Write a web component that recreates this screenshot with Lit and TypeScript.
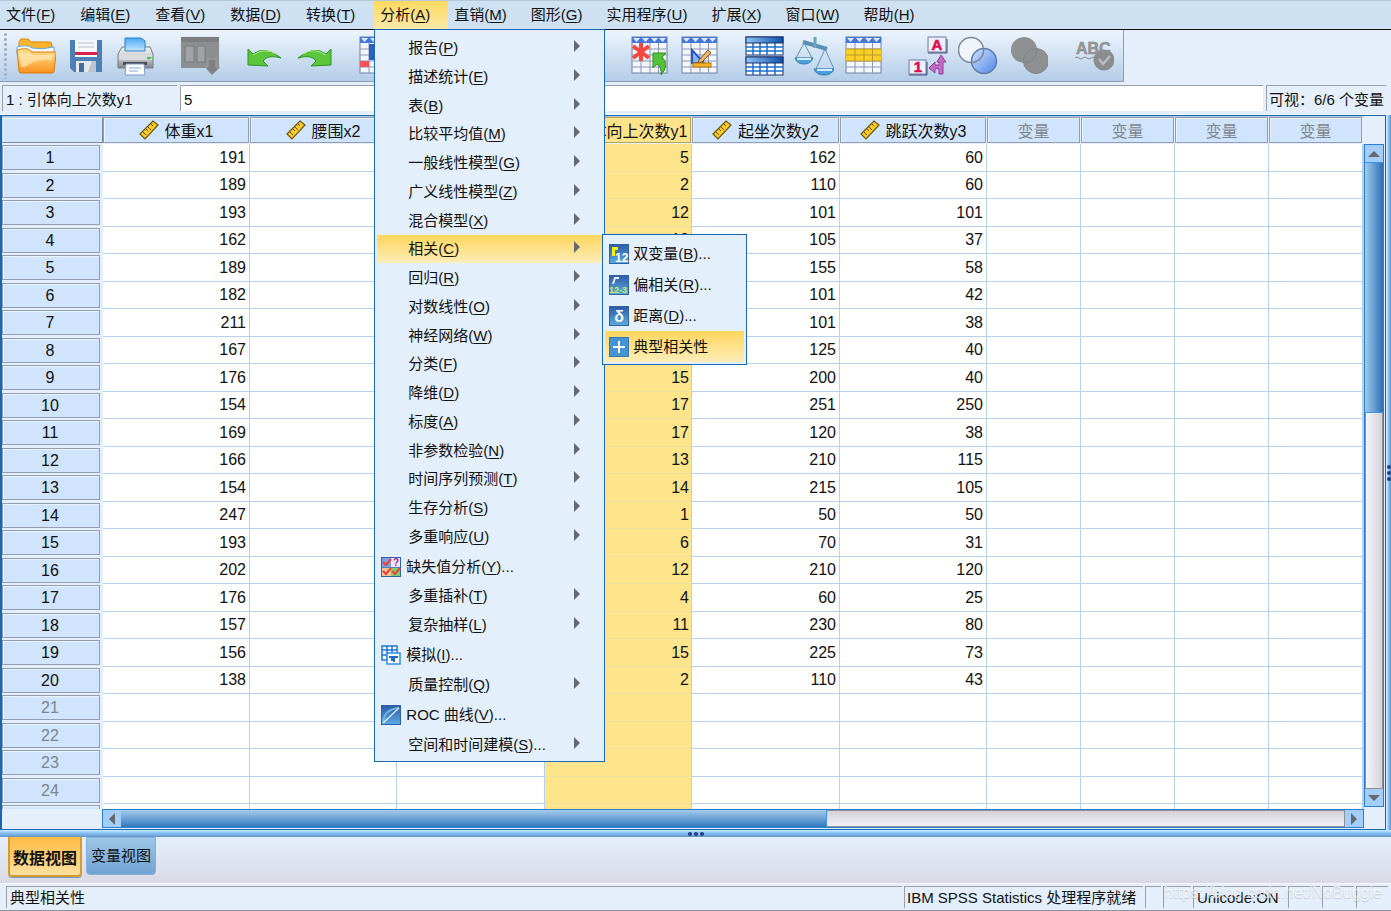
import { LitElement, html, svg, css, nothing, TemplateResult } from "lit";
import { customElement, state } from "lit/decorators.js";
import { classMap } from "lit/directives/class-map.js";

type Entry = { label: string; key?: string; more?: boolean; icon?: TemplateResult; open?: boolean; leaf?: boolean };

const pic = (w: number, h: number, body: unknown) =>
  html`<svg width=${w} height=${h} viewBox="0 0 ${w} ${h}" aria-hidden="true">${body}</svg>`;

/* ---------- toolbar drawings, all on a 40 x 40 field ---------- */

const sheetBase = svg`
  <rect x="2" y="1" width="35" height="36" fill="#f3f6fb" stroke="#6f7fa6"/>
  <rect x="2" y="1" width="35" height="6" fill="#4677d8"/>
  <path d="M3 2h7l-3.500 4zM12 2h7l-3.500 4zM21 2h7l-3.500 4zM29 2h7l-3.500 4z" fill="#dfe9ff"/>
  <path d="M2 13h35M2 19h35M2 25h35M2 31h35M11 7v30M20 7v30M28.500 7v30" stroke="#8b97b4" fill="none"/>`;

const art: Record<string, TemplateResult> = {
  open: svg`
    <defs><linearGradient id="fo" x1="0" y1="0" x2="0" y2="1"><stop offset="0" stop-color="#ffe08a"/><stop offset=".5" stop-color="#ffbe58"/><stop offset="1" stop-color="#f98f1c"/></linearGradient></defs>
    <path d="M3 12V6l2-3h7l3 3h18q3 0 3 3v8H3z" fill="#fbb52c" stroke="#d98508"/>
    <path d="M1 11q10-3 15 1 10 2 22-1v7H1z" fill="#f4faff" stroke="#5ea9e6"/>
    <path d="M1 14q5-2 11-1l4 3h23q1 0 1 2l-2 17q0 2-2 2H5q-2 0-2-2z" fill="url(#fo)" stroke="#e0790a"/>
    <path d="M3 17h10l4 2h20l-1 5Q20 22 9 31H5z" fill="#fff0c8" opacity=".6"/>`,
  save: svg`
    <path d="M4 4h32v32H8l-4-4z" fill="#4c80b4"/>
    <path d="M9 4h22v17H9z" fill="#f4f7fa"/><path d="M12 7h16M12 11h16" stroke="#c9d3dd" stroke-width="1.5"/>
    <rect x="9" y="16" width="22" height="3" fill="#d8204c"/>
    <rect x="10" y="25" width="20" height="11" fill="#e4e8ec"/><rect x="13" y="27" width="5" height="9" fill="#3f6f9f"/>
    <path d="M26 25h4v11h-8z" fill="#bcc5ce"/>`,
  print: svg`
    <defs><linearGradient id="pa" x1="0" y1="0" x2="0" y2="1"><stop offset="0" stop-color="#4aa9f0"/><stop offset="1" stop-color="#c3e6ff"/></linearGradient>
    <linearGradient id="pb" x1="0" y1="0" x2="0" y2="1"><stop offset="0" stop-color="#f4f4f4"/><stop offset=".55" stop-color="#c4c7ca"/><stop offset="1" stop-color="#7f848a"/></linearGradient></defs>
    <path d="M6 11h28l3 7v14H2V18z" fill="url(#pb)" stroke="#777c82"/>
    <path d="M9 15V2h16l4 3v10z" fill="url(#pa)" stroke="#2c80cc"/>
    <path d="M3 19h33v5H3z" fill="#d9dbde"/><rect x="7" y="26" width="24" height="3" fill="#4b4f55"/>
    <rect x="31" y="21" width="4" height="2" fill="#35c64a"/>
    <path d="M10 28h18l1 11H9z" fill="#fff" stroke="#7c9cc4"/><path d="M13 32h12M13 35h9" stroke="#88a8d0"/>`,
  recall: svg`
    <path d="M1 1h38v31H1z" fill="#8d8e90"/><path d="M1 1h38v5H1z" fill="#7d7e80"/>
    <path d="M5 10h9v16H5zM17 10h8v16h-8z" fill="#a1a2a4" stroke="#77787a"/>
    <path d="M28 23h8v8h4l-8 8-7-8h3z" fill="#7f8082" stroke="#a0a1a3"/>`,
  undo: svg`<path d="M4 13l5 5q12-9 28 4-13-4-18 3l5 5L4 29z" fill="#5bc53c" stroke="#2a9420"/><path d="M9 19q12-8 23-1" stroke="#b5f08f" fill="none"/>`,
  redo: svg`<path d="M37 13l-5 5Q20 9 4 22q13-4 18 3l-5 5 20-1z" fill="#5bc53c" stroke="#2a9420"/><path d="M32 19q-12-8-23-1" stroke="#b5f08f" fill="none"/>`,
  gotoCase: svg`${sheetBase}<rect x="2" y="25" width="9" height="6" fill="#f0545e"/><path d="M11 8h20v16H11z" fill="#2a5fc0"/>`,
  gotoVar: svg`${sheetBase}<rect x="11" y="8" width="9" height="29" fill="#f0545e"/>`,
  variables: svg`${sheetBase}<rect x="11" y="13" width="18" height="12" fill="#4677d8"/>`,
  stats: svg`<path d="M4 36V20h8v16zM16 36V6h8v30zM28 36V14h8v22z" fill="#4677d8"/>`,
  find: svg`<path d="M10 18h9v20H8zM25 18h8v20h-8zM19 22h6v8h-6z" fill="#26344a"/>`,
  insertCase: svg`${sheetBase}
    <path d="M11 7v18M3 10l16 12M19 10L3 22" stroke="#f5483f" stroke-width="4" fill="none"/>
    <path d="M23 17h13l-4 4q8 8-1 18 1-8-4-11l-4 4z" fill="#55c13a" stroke="#2b9320"/>`,
  insertVar: svg`${sheetBase}
    <path d="M12 14v13h12z" fill="#8db5ff" stroke="#2456c8" stroke-width="2"/>
    <path d="M19 24l9-10 3 3-9 9-4 1z" fill="#e8b56a" stroke="#7a5225"/>
    <rect x="13" y="27" width="18" height="4" fill="#f5b321" stroke="#b3740a"/>`,
  split: svg`
    <defs><linearGradient id="sp"><stop offset="0" stop-color="#8ec5f5"/><stop offset="1" stop-color="#0b50ae"/></linearGradient></defs>
    ${[1, 21].map(y => svg`<rect x="2" y=${y} width="37" height="18" fill="#fff" stroke="#1b2e66"/>
      <path d="M2 ${y + 10}h37M2 ${y + 14}h37M9 ${y + 6}v12M16 ${y + 6}v12M23 ${y + 6}v12M31 ${y + 6}v12" stroke="#1a6fd0" stroke-width="1.500" fill="none"/>
      <rect x="2" y=${y} width="37" height="6" fill="url(#sp)" stroke="#1b2e66"/>`)}`,
  weight: svg`
    <path d="M9 6l24 7" stroke="#5790b4" stroke-width="4"/><path d="M21 1v11" stroke="#6fa3c3" stroke-width="3"/>
    <path d="M10 7L2 22h16L10 7M31 13l-9 20h18L31 13" fill="none" stroke="#5d93b5"/>
    <path d="M1 22h18q-2 6-9 6t-9-6zM20 33h20q-2 6-10 6t-10-6z" fill="#4aa0dc" stroke="#3c7eaa"/>
    <path d="M3 23h14M23 34h15" stroke="#d4f0ff" stroke-width="2"/>`,
  select: svg`${sheetBase}<path d="M2 13h35v12H2z" fill="#fbd023"/><path d="M2 13h35M2 19h35M2 25h35M11 13v12M20 13v12M28.500 13v12" stroke="#b79a35" fill="none"/>`,
  labels: svg`
    <rect x="20" y="1" width="18" height="15" fill="#eef1fb" stroke="#6d79a2"/><rect x="1" y="24" width="17" height="14" fill="#eef1fb" stroke="#6d79a2"/>
    <path d="M20 17h19V3M1 39h18V26" stroke="#3d4975" fill="none"/>
    <text x="29" y="14" text-anchor="middle" font-size="15" font-weight="bold" fill="#e4064c" stroke="#e4064c" stroke-width=".5">A</text>
    <text x="10" y="36" text-anchor="middle" font-size="15" font-weight="bold" fill="#e4064c" stroke="#e4064c" stroke-width=".5">1</text>
    <path d="M33 19l5 7h-3v12h-4v-5q-2-1-4 0v4l-6-5 6-6v3h4v-3h-2z" fill="#c66bc4" stroke="#8e3e93"/>`,
  sets: svg`<defs><linearGradient id="cs" x1="0" y1="0" x2="1" y2="1"><stop offset="0" stop-color="#d4e3fb"/><stop offset="1" stop-color="#4a86ea"/></linearGradient></defs>
    <circle cx="13" cy="14" r="12.500" fill="#f0f5fc" stroke="#7c8796" stroke-width="1.500"/><circle cx="26" cy="25" r="12.500" fill="url(#cs)" stroke="#5f7ba8" stroke-width="1.500"/>
    <path d="M25.500 12.500a12.500 12.500 0 0 1-11 14" fill="none" stroke="#7c8796" stroke-width="1.500"/>`,
  allVars: svg`<circle cx="16" cy="14" r="13" fill="#8e8f91"/><circle cx="28" cy="25" r="12.500" fill="#8e8f91" stroke="#828385"/><path d="M29 14a13 13 0 0 1-12 13" fill="none" stroke="#7d7e80"/>`,
  spell: svg`
    <text x="2" y="18" font-size="16" font-weight="bold" fill="#9a9b9d" stroke="#7f8082" stroke-width=".5">ABC</text>
    <path d="M1 22q2-2 4 0t4 0 4 0 4 0 4 0" fill="none" stroke="#8b8c8e"/>
    <circle cx="30" cy="24" r="10.500" fill="#8b8c8e"/><path d="M25 23l4 5 7-8" fill="none" stroke="#b9babc" stroke-width="2.500"/>`,
};

const toolGroups: { tight?: boolean; items: [string, string][] }[] = [
  { items: [["open", "打开"], ["save", "保存"], ["print", "打印"]] },
  { items: [["recall", "重新调用对话框"]] },
  { items: [["undo", "撤销"], ["redo", "重做"]] },
  { items: [["gotoCase", "转到个案"]] },
  { items: [["gotoVar", "转到变量"], ["variables", "变量"], ["stats", "描述统计"], ["find", "查找"]] },
  { tight: true, items: [["insertCase", "插入个案"], ["insertVar", "插入变量"]] },
  { items: [["split", "拆分文件"], ["weight", "个案加权"], ["select", "选择个案"]] },
  { items: [["labels", "值标签"], ["sets", "使用变量集"], ["allVars", "显示所有变量"]] },
  { items: [["spell", "拼写检查"]] },
];

/* ---------- 20 x 20 menu drawings ---------- */

const tile = (id: string) => svg`
  <defs><linearGradient id=${id} x1="0" y1="0" x2="0" y2="1"><stop offset="0" stop-color="#2d5ba6"/><stop offset="1" stop-color="#5cabe0"/></linearGradient></defs>
  <rect x=".5" y=".5" width="19" height="19" fill="url(#${id})" stroke="#2f62a6"/>`;

const menuArt = {
  bivariate: pic(20, 20, svg`${tile("t1")}<path d="M3 3h6v3H6v6H3z" fill="#f4f000"/><text x="6" y="18" font-size="12" font-weight="bold" fill="#fff">12</text>`),
  partial: pic(20, 20, svg`${tile("t2")}<path d="M4 9l2-6h4" stroke="#e6eef8" stroke-width="2" fill="none"/><text x="0" y="18" font-size="9" font-weight="bold" fill="#c9f04a">12-3</text>`),
  distance: pic(20, 20, svg`${tile("t3")}<text x="10" y="16" text-anchor="middle" font-size="16" font-weight="bold" fill="#fff">δ</text>`),
  plus: pic(20, 20, svg`<rect x=".5" y=".5" width="19" height="19" fill="#4493d4" stroke="#3777b2"/><path d="M10 4v12M4 10h12" stroke="#fff" stroke-width="2"/>`),
  missing: pic(20, 20, svg`${tile("t4")}<rect x="1" y="1" width="9" height="9" fill="#7f9fe0"/><rect x="10" y="1" width="9" height="9" fill="#f4e6f8"/><path d="M1 11h9v8H1z" fill="#f5c19a"/><path d="M10 11h9v8h-9z" fill="#7fce6c"/>
    <path d="M2 5l3 3 5-6M2 14l3 3 5-6M11 14l3 3 5-6" stroke="#e8432e" stroke-width="2" fill="none"/><text x="12" y="9" font-size="10" font-weight="bold" fill="#a026b0">?</text>`),
  simulate: pic(20, 20, svg`<path d="M1 1h15v14H1z" fill="#fff" stroke="#1c78cf" stroke-width="1.500"/><path d="M1 5h15M1 10h15M6 1v14M11 1v14" stroke="#1c78cf" stroke-width="1.500" fill="none"/>
    <rect x="6" y="8" width="13" height="11" fill="#fff" stroke="#2d8ee0" stroke-width="1.500"/><path d="M8 11h9v2h-3v4h-2v-1h-2v-3H8z" fill="#1c6fc2"/>`),
  roc: pic(20, 20, svg`${tile("t5")}<path d="M2 18Q3 4 18 3" fill="none" stroke="#6fb4e6" stroke-width="2"/><path d="M2 18L18 3" stroke="#d3ecfb" stroke-width="1.500"/>`),
};

const ruler = html`<svg width="20" height="20" viewBox="0 0 20 20" aria-hidden="true">
  <path d="M1 14L14 1l5 4L6 19z" fill="#fbcd22" stroke="#6b5310" stroke-width="1.200"/>
  <path d="M4 12l3 3M7 9l2 2M9 7l3 3M12 4l2 2" stroke="#5a4408"/></svg>`;

const arrow = (dir: "up" | "down" | "left" | "right") => {
  const d = { up: "M6 3l6 6H0z", down: "M6 9l6-6H0z", left: "M3 6l6-6v12z", right: "M9 6L3 0v12z" }[dir];
  return html`<svg width="12" height="12" viewBox="0 0 12 12" aria-hidden="true"><path d=${d} fill="#66686b"/></svg>`;
};

/* ---------- menus ---------- */

const menuBar: Entry[] = [
  { label: "文件", key: "F" }, { label: "编辑", key: "E" }, { label: "查看", key: "V" }, { label: "数据", key: "D" },
  { label: "转换", key: "T" }, { label: "分析", key: "A", open: true }, { label: "直销", key: "M" }, { label: "图形", key: "G" },
  { label: "实用程序", key: "U" }, { label: "扩展", key: "X" }, { label: "窗口", key: "W" }, { label: "帮助", key: "H" },
];

const analyze: Entry[] = [
  { label: "报告", key: "P" }, { label: "描述统计", key: "E" }, { label: "表", key: "B" }, { label: "比较平均值", key: "M" },
  { label: "一般线性模型", key: "G" }, { label: "广义线性模型", key: "Z" }, { label: "混合模型", key: "X" },
  { label: "相关", key: "C", open: true }, { label: "回归", key: "R" }, { label: "对数线性", key: "O" },
  { label: "神经网络", key: "W" }, { label: "分类", key: "F" }, { label: "降维", key: "D" }, { label: "标度", key: "A" },
  { label: "非参数检验", key: "N" }, { label: "时间序列预测", key: "T" }, { label: "生存分析", key: "S" }, { label: "多重响应", key: "U" },
  { label: "缺失值分析", key: "Y", more: true, icon: menuArt.missing, leaf: true },
  { label: "多重插补", key: "T" }, { label: "复杂抽样", key: "L" },
  { label: "模拟", key: "I", more: true, icon: menuArt.simulate, leaf: true },
  { label: "质量控制", key: "Q" },
  { label: "ROC 曲线", key: "V", more: true, icon: menuArt.roc, leaf: true },
  { label: "空间和时间建模", key: "S", more: true },
];

const correlate: Entry[] = [
  { label: "双变量", key: "B", more: true, icon: menuArt.bivariate },
  { label: "偏相关", key: "R", more: true, icon: menuArt.partial },
  { label: "距离", key: "D", more: true, icon: menuArt.distance },
  { label: "典型相关性", icon: menuArt.plus, open: true },
];

const caption = (e: Entry) => html`<span>${e.label}${e.key ? html`(<u>${e.key}</u>)` : nothing}${e.more ? "..." : nothing}</span>`;

/* ---------- data ---------- */

const variables = ["体重x1", "腰围x2", "脉搏x3", "引体向上次数y1", "起坐次数y2", "跳跃次数y3"];
const SELECTED = 3;
const cases = [
  [191, 36, 50, 5, 162, 60], [189, 37, 52, 2, 110, 60], [193, 38, 58, 12, 101, 101], [162, 35, 62, 12, 105, 37],
  [189, 35, 46, 13, 155, 58], [182, 36, 56, 4, 101, 42], [211, 38, 56, 8, 101, 38], [167, 34, 60, 6, 125, 40],
  [176, 31, 74, 15, 200, 40], [154, 33, 56, 17, 251, 250], [169, 34, 50, 17, 120, 38], [166, 33, 52, 13, 210, 115],
  [154, 34, 64, 14, 215, 105], [247, 46, 50, 1, 50, 50], [193, 36, 46, 6, 70, 31], [202, 37, 62, 12, 210, 120],
  [176, 37, 54, 4, 60, 25], [157, 32, 52, 11, 230, 80], [156, 33, 54, 15, 225, 73], [138, 33, 68, 2, 110, 43],
];
const EMPTY_COLUMNS = 4;
const NUMBERED_ROWS = 24;

@customElement("app-root")
export class AppRoot extends LitElement {
  @state() private cell = "5";

  static styles = css`
    :host {
      display: flex; flex-direction: column; height: 100vh; overflow: hidden; position: relative;
      box-sizing: border-box; border-bottom: 1px solid #8d9299;
      background: #e4effb; color: #111;
      font: 15px/20px "Liberation Sans", "Noto Sans CJK SC", sans-serif;
    }
    * { box-sizing: border-box; }
    button, input { font: inherit; color: inherit; border: 0; padding: 0; margin: 0; background: none; border-radius: 0; }
    ul { list-style: none; margin: 0; padding: 0; }
    svg { display: block; flex: none; }
    u { text-underline-offset: 2px; }

    .menubar { display: flex; height: 30px; flex: none; background: #cee1f2; border-top: 1px solid #b4c8dc; border-bottom: 1px solid #111; }
    .menubar > li { position: relative; display: flex; }
    .top { padding: 0 19px 0 6px; white-space: nowrap; }
    .top.open { background: linear-gradient(#fed960, #fee9a8); }
    .active > .top, .active ~ li > .top { padding-right: 18px; }

    .menu { position: absolute; z-index: 5; background: #e4effc; border: 1px solid #1a69b8; padding: 3px 2px 2px; }
    .menu.main { top: 28px; left: 0; width: 231px; }
    .menu.sub { top: -1px; left: 225px; width: 145px; }
    .menu li { position: relative; }
    .entry { display: flex; align-items: center; width: 100%; height: 29px; padding: 0 22px 0 31px; text-align: left; white-space: nowrap; }
    .main > li:nth-child(4n):not(.pictured) > .entry { height: 28px; }
    .entry span { flex: 1; }
    .entry.open { background: linear-gradient(#fed65c, #feedb8); }
    .pictured > .entry { height: 31px; padding: 0 0 0 4px; gap: 5px; }
    .sub > .pictured > .entry { gap: 4px; }
    .tip { width: 6px; height: 12px; margin-bottom: 4px; }

    .toolbar { display: flex; align-self: flex-start; flex: none; height: 52px; padding: 0 4px 0 11px; background: linear-gradient(#edf5fd, #b3cde8); border: solid #8f9cab; border-width: 0 1px 1px 0; position: relative; }
    .toolbar::before { content: ""; position: absolute; left: 4px; top: 2px; bottom: 2px; width: 3px; background: radial-gradient(circle, #a4afbd 1px, transparent 2px) 0 0 / 3px 5px; }
    .group { display: flex; }
    .group + .group { margin-left: 14px; }
    .group + .group.tight { margin-left: 8px; }
    .group:last-child { margin-left: 16px; }
    .tool { width: 50px; display: grid; place-items: center; }

    .cellbar { display: flex; flex: none; height: 33px; padding: 3px 5px 3px 2px; gap: 3px; border-bottom: 1px solid #fff; }
    .well { display: flex; align-items: center; border: solid #9b9fa6; border-width: 1px 0 0 1px; padding: 0 3px; white-space: nowrap; }
    .cellbar .well { padding-top: 2px; }
    .cellbar .name { width: 175px; }
    .cellbar .value { flex: 1; min-width: 0; background: #fff; }
    .cellbar .well:last-child { padding: 2px 2px 0; }

    .split { display: flex; flex: 1; min-height: 0; }
    .sheet { flex: 1; min-width: 0; display: flex; flex-direction: column; border: 1px solid #1668b4; border-left-width: 2px; }
    .upper { flex: 1; min-height: 0; display: flex; }
    .viewport { flex: 1; min-width: 0; overflow: hidden; background: #fff; border-top: 1px solid #b8c7d9; }
    .side { width: 5px; background: linear-gradient(90deg, #dff2ff, #7fbdf5 60%, #5791c9); display: grid; place-items: center; }
    .dots { display: flex; gap: 2px; }
    .dots i { width: 4px; height: 4px; border-radius: 2px; background: #1d3f86; }
    .side .dots { flex-direction: column; }

    table { table-layout: fixed; width: 100%; border-collapse: separate; border-spacing: 0; font-size: 16px; }
    th, td { padding: 0; }
    .c-row { width: 101px; }
    .c-var { width: 147px; }
    .c-wide { width: 148px; }
    .c-new { width: 94px; }
    thead tr { height: 27px; }
    tbody tr { height: 28px; }
    tbody tr:nth-child(even) { height: 27px; }
    th { font-weight: normal; vertical-align: top; background: #e4effb; }
    th > div { display: flex; align-items: center; justify-content: center; gap: 6px; height: 26px; background: #d0e4fd; border: 1px solid #929daf; box-shadow: inset 1px 1px #eaf4ff; margin-right: 1px; white-space: nowrap; overflow: hidden; }
    thead th > div { padding-top: 3px; }
    thead th > div > svg { margin-bottom: 3px; }
    tbody th > div { height: 25px; margin: 1px 3px 0 0; padding-right: 2px; }
    thead th:first-child > div { margin-right: 0; border-color: #c0d2e8 #7d8798 #7d8798 #c0d2e8; }
    .blank { color: #7e848c; }
    th > div.picked { background: #fde48a; border-color: #b8a457; box-shadow: none; }
    td { text-align: right; padding-right: 3px; border: solid #b6d1ee; border-width: 0 1px 1px 0; line-height: 26px; }
    td.picked { background: #fee58b; border-bottom-color: #f1dfa0; padding-right: 2px; }

    .vbar { width: 20px; margin: 28px 1px 2px 0; display: flex; flex-direction: column; border: 1px solid #2b7fd0; }
    .hbar { height: 19px; margin: 0 21px 1px 100px; display: flex; flex: none; border: 1px solid #2b7fd0; }
    .step { flex: none; width: 18px; height: 17px; background: #a3cdfb; display: grid; place-items: center; }
    .track { flex: 1; background: linear-gradient(#d3d2dc, #f0eff4); border: solid #8f9096; border-width: 1px 1px 1px 0; }
    .vbar .track { background: linear-gradient(90deg, #f6f6fa, #d3d2dc); border-width: 0 1px 1px; }
    .hbar .thumb { width: 56%; background: linear-gradient(#a5cbec, #3079bd); border-right: 1px solid #3a97f0; }
    .vbar .thumb { height: 38%; background: linear-gradient(90deg, #a5cbec, #2a71b6); border-top: 1px solid #3a97f0; border-bottom: 1px solid #3a97f0; }

    .divider { flex: none; height: 7px; background: linear-gradient(#c9efff, #8ac4f8 40%, #6394c6); display: grid; place-items: center; }
    .tabs { flex: none; display: flex; align-items: flex-start; gap: 4px; height: 46px; padding-left: 8px; background: linear-gradient(#e4effc, #dad9e5); }
    .tab { height: 38px; padding: 0 4px; border-radius: 0 0 4px 4px; background: linear-gradient(#9cc6e8, #71a3d2); border: 1px solid #85b1d9; }
    .tab.current { height: 40px; padding: 5px 3px 0; font-size: 16px; font-weight: bold; background: linear-gradient(#fdbb42, #ffe1a0); border: solid #d59b2c; border-width: 0 2px 2px; box-shadow: 0 1px #6f9cc6; }

    .status { flex: none; display: flex; gap: 2px; height: 27px; padding: 2px 3px 2px 6px; border-top: 1px solid #f4f8fd; }
    .status .message { flex: 1; }
    .status .engine { width: 239px; padding: 0 2px; }
    .w16 { width: 16px; } .w28 { width: 28px; } .w32 { width: 32px; } .w93 { width: 93px; }
    .mark { position: absolute; right: 9px; bottom: 7px; font-size: 16px; color: #ffffffb0; text-shadow: 0 1px 1px #8a8f9866; pointer-events: none; }
  `;

  private submenu() {
    return html`<ul class="menu sub" role="menu">
      ${correlate.map(e => html`<li class="pictured"><button role="menuitem" class=${classMap({ entry: true, open: !!e.open })}>${e.icon}${caption(e)}</button></li>`)}
    </ul>`;
  }

  private dropdown() {
    return html`<ul class="menu main" role="menu">
      ${analyze.map(e => html`<li class=${classMap({ pictured: !!e.icon })}>
        <button role="menuitem" class=${classMap({ entry: true, open: !!e.open })}>
          ${e.icon ?? nothing}${caption(e)}
          ${e.leaf ? nothing : html`<svg class="tip" viewBox="0 0 6 12" aria-hidden="true"><path d="M0 0l6 6-6 6z" fill="#66696d"/></svg>`}
        </button>
        ${e.open ? this.submenu() : nothing}
      </li>`)}
    </ul>`;
  }

  private grid() {
    const blanks = Array.from({ length: EMPTY_COLUMNS });
    return html`<table>
      <colgroup>
        <col class="c-row">
        ${variables.map((_, i) => html`<col class=${i === 0 || i % 2 ? "c-var" : "c-wide"}>`)}
        ${blanks.map(() => html`<col class="c-new">`)}
        <col>
      </colgroup>
      <thead><tr>
        <th><div></div></th>
        ${variables.map((v, i) => html`<th scope="col"><div class=${classMap({ picked: i === SELECTED })}>${ruler}<span>${v}</span></div></th>`)}
        ${blanks.map(() => html`<th scope="col"><div class="blank">变量</div></th>`)}
        <th></th>
      </tr></thead>
      <tbody>
        ${Array.from({ length: NUMBERED_ROWS + 1 }, (_, r) => html`<tr>
          <th scope="row"><div class=${classMap({ blank: r >= cases.length })}>${r < NUMBERED_ROWS ? r + 1 : nothing}</div></th>
          ${variables.map((_, c) => html`<td class=${classMap({ picked: c === SELECTED })}>${cases[r]?.[c] ?? ""}</td>`)}
          ${blanks.map(() => html`<td></td>`)}
          <td></td>
        </tr>`)}
      </tbody>
    </table>`;
  }

  render() {
    return html`
      <ul class="menubar" role="menubar">
        ${menuBar.map(e => html`<li class=${classMap({ active: !!e.open })}><button role="menuitem" class=${classMap({ top: true, open: !!e.open })}>${caption(e)}</button>${e.open ? this.dropdown() : nothing}</li>`)}
      </ul>
      <div class="toolbar" role="toolbar">
        ${toolGroups.map(g => html`<div class=${classMap({ group: true, tight: !!g.tight })}>
          ${g.items.map(([id, name]) => html`<button class="tool" aria-label=${name}>${pic(40, 40, art[id])}</button>`)}
        </div>`)}
      </div>
      <div class="cellbar">
        <label class="well name" for="cell">1 : 引体向上次数y1</label>
        <input id="cell" class="well value" .value=${this.cell} @input=${(ev: Event) => (this.cell = (ev.target as HTMLInputElement).value)}>
        <div class="well">可视：6/6 个变量</div>
      </div>
      <div class="split">
        <div class="sheet">
          <div class="upper">
            <div class="viewport">${this.grid()}</div>
            <div class="vbar">
              <button class="step" aria-label="向上滚动">${arrow("up")}</button>
              <div class="thumb"></div><div class="track"></div>
              <button class="step" aria-label="向下滚动">${arrow("down")}</button>
            </div>
          </div>
          <div class="hbar">
            <button class="step" aria-label="向左滚动">${arrow("left")}</button>
            <div class="thumb"></div><div class="track"></div>
            <button class="step" aria-label="向右滚动">${arrow("right")}</button>
          </div>
        </div>
        <div class="side"><div class="dots"><i></i><i></i><i></i></div></div>
      </div>
      <div class="divider"><div class="dots"><i></i><i></i><i></i></div></div>
      <div class="tabs" role="tablist">
        <button class="tab current" role="tab" aria-selected="true">数据视图</button>
        <button class="tab" role="tab" aria-selected="false">变量视图</button>
      </div>
      <div class="status">
        <div class="well message">典型相关性</div>
        <div class="well engine">IBM SPSS Statistics 处理程序就绪</div>
        <div class="well w16"></div><div class="well w28"></div>
        <div class="well w93">Unicode:ON</div>
        <div class="well w32"></div><div class="well w32"></div><div class="well w32"></div>
      </div>
      <div class="mark">https://blog.csdn.net/NoBuggie</div>
    `;
  }
}
